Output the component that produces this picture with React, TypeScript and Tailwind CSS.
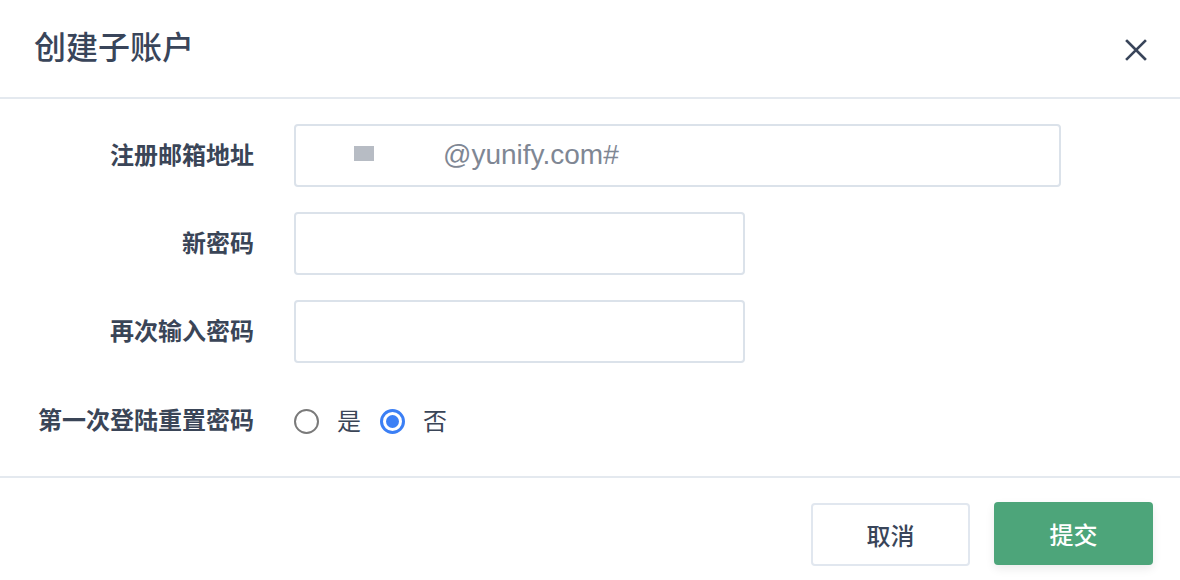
import React from "react";

const cjk = { fontFamily: '"Noto Sans CJK SC", "Noto Sans", sans-serif' };

function Label({ children }: { children: React.ReactNode }) {
  return (
    <div className="w-[254px] shrink-0 -mt-[4px] text-right text-[24px] font-semibold leading-none text-[#3a4557]">
      {children}
    </div>
  );
}

export default function App() {
  return (
    <div className="w-[1180px] h-[580px] bg-white flex flex-col overflow-hidden" style={cjk}>
      <div className="h-[99px] shrink-0 border-b-2 border-[#e4e9ef] flex items-center justify-between pl-[34px] pr-[33px]">
        <div className="text-[32px] leading-none text-[#39455a] font-medium -mt-[8px]">创建子账户</div>
        <svg width="22" height="22" viewBox="0 0 22 22" className="mt-[2px]">
          <path d="M2 2 L20 20 M20 2 L2 20" stroke="#39455a" strokeWidth="2.6" strokeLinecap="square" />
        </svg>
      </div>

      <div className="flex flex-col pt-[25px] pb-[24px] border-b-2 border-[#e4e9ef] h-[379px] shrink-0">
        <div className="flex items-center h-[63px]">
          <Label>注册邮箱地址</Label>
          <div className="ml-[40px] w-[767px] h-[63px] border-2 border-[#dbe2ea] rounded-[4px] flex items-center">
            <div className="ml-[58px] -mt-[5px] w-[20px] h-[15px] bg-[#b7bcc4]" />
            <span
              className="ml-[69px] -mt-[2px] text-[28px] leading-none text-[#7f8794]"
              style={{ fontFamily: '"Liberation Sans", Arial, sans-serif' }}
            >
              @yunify.com#
            </span>
          </div>
        </div>
        <div className="flex items-center h-[63px] mt-[25px]">
          <Label>新密码</Label>
          <div className="ml-[40px] w-[451px] h-[63px] border-2 border-[#dbe2ea] rounded-[4px]" />
        </div>
        <div className="flex items-center h-[63px] mt-[25px]">
          <Label>再次输入密码</Label>
          <div className="ml-[40px] w-[451px] h-[63px] border-2 border-[#dbe2ea] rounded-[4px]" />
        </div>
        <div className="flex items-center h-[62px] mt-[27px]">
          <Label>第一次登陆重置密码</Label>
          <div className="ml-[40px] flex items-center">
            <span className="w-[25px] h-[25px] rounded-full border-2 border-[#7a7a7a] bg-white" />
            <span className="ml-[18px] -mt-[3px] text-[24px] leading-none text-[#3a4557]">是</span>
            <span className="ml-[19px] w-[25px] h-[25px] rounded-full border-[3px] border-[#3b7ff5] bg-white flex items-center justify-center">
              <span className="w-[13px] h-[13px] rounded-full bg-[#3b7ff5]" />
            </span>
            <span className="ml-[18px] -mt-[3px] text-[24px] leading-none text-[#3a4557]">否</span>
          </div>
        </div>
      </div>

      <div className="flex-1 flex justify-end items-start pt-[24px] pr-[27px] gap-[24px]">
        <button className="w-[159px] h-[63px] mt-[1px] border-2 border-[#e1e7ef] rounded-[4px] bg-white text-[24px] font-medium text-[#39455a] flex items-center justify-center">
          取消
        </button>
        <button className="w-[159px] h-[63px] rounded-[4px] bg-[#4da57a] text-[24px] font-medium text-white flex items-center justify-center shadow-[0_4px_10px_rgba(0,0,0,0.08)]">
          提交
        </button>
      </div>
    </div>
  );
}
